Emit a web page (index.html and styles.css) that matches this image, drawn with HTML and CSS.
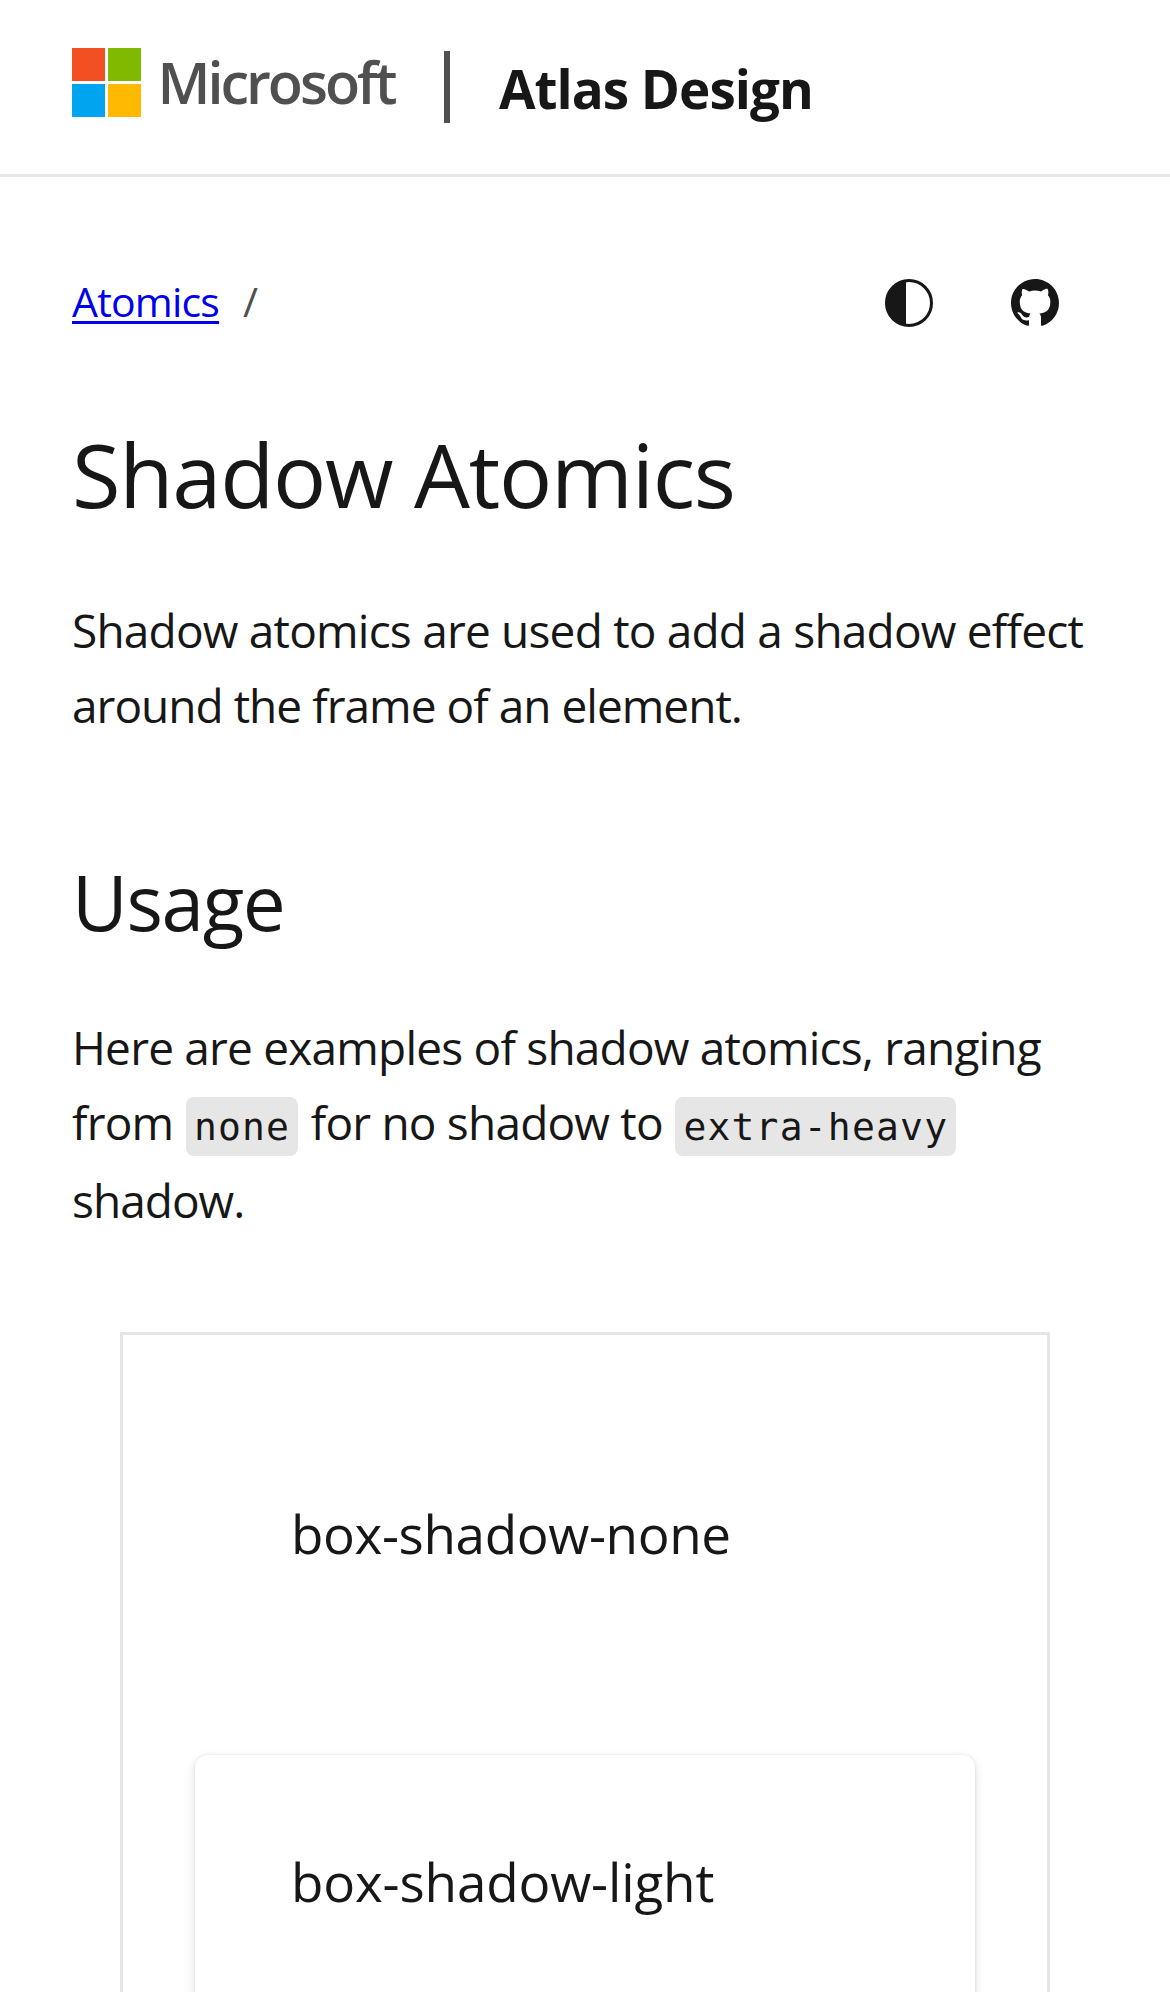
FILE: index.html
```
<!DOCTYPE html>
<html lang="en">
<head>
<meta charset="utf-8">
<title>Shadow Atomics</title>
<link rel="stylesheet" href="styles.css">
</head>
<body>
<header class="site-header">
  <svg class="logo" width="378" height="76" viewBox="0 0 378 76" role="img" aria-label="Microsoft">
    <path fill="#f25022" d="M0 0h33v33H0z"/><path fill="#7fba00" d="M36 0h33v33H36z"/>
    <path fill="#00a4ef" d="M0 36h33v33H0z"/><path fill="#ffb900" d="M36 36h33v33H36z"/>
    <text class="logo-text" x="85.5" y="55.5" textLength="240">Microsoft</text>
    <path fill="#505050" d="M372 3h6v72h-6z"/>
  </svg>
  <span class="site-name">Atlas Design</span>
</header>
<main class="content">
  <div class="toolbar">
    <nav class="breadcrumb"><a href="#">Atomics</a><span class="slash">/</span></nav>
    <div class="actions">
      <svg width="48" height="48" viewBox="0 0 48 48"><circle cx="24" cy="24" r="22.5" fill="none" stroke="#171717" stroke-width="3"/><path fill="#171717" d="M21 1.5a22.6 22.6 0 0 0 0 45z"/></svg>
      <svg width="48" height="48" viewBox="0 0 16 16"><path fill="#171717" d="M8 0C3.58 0 0 3.58 0 8c0 3.54 2.29 6.53 5.47 7.59.4.07.55-.17.55-.38 0-.19-.01-.82-.01-1.49-2.01.37-2.53-.49-2.69-.94-.09-.23-.48-.94-.82-1.13-.28-.15-.68-.52-.01-.53.63-.01 1.08.58 1.23.82.72 1.21 1.87.87 2.33.66.07-.52.28-.87.51-1.07-1.78-.2-3.64-.89-3.64-3.95 0-.87.31-1.59.82-2.15-.08-.2-.36-1.02.08-2.12 0 0 .67-.21 2.2.82.64-.18 1.32-.27 2-.27.68 0 1.36.09 2 .27 1.53-1.04 2.2-.82 2.2-.82.44 1.1.16 1.92.08 2.12.51.56.82 1.27.82 2.15 0 3.07-1.87 3.75-3.65 3.95.29.25.54.73.54 1.48 0 1.07-.01 1.93-.01 2.2 0 .21.15.46.55.38A8.013 8.013 0 0016 8c0-4.42-3.58-8-8-8z"/></svg>
    </div>
  </div>
  <h1>Shadow Atomics</h1>
  <p class="intro">Shadow atomics are used to add a shadow effect<br><span class="tight">around the frame of an element.</span></p>
  <h2>Usage</h2>
  <p class="usage">Here are examples of shadow atomics, ranging<br>from <code>none</code> for no shadow to <code>extra-heavy</code><br><span class="tight">shadow.</span></p>
  <section class="example">
    <div class="card card-none">box-shadow-none</div>
    <div class="card card-light">box-shadow-light</div>
  </section>
</main>
</body>
</html>
```
FILE: styles.css
```
* { box-sizing: border-box; }
html { overflow: hidden; }
body { margin: 0; height: 1992px; overflow: hidden; background: #fff; color: #171717; font-family: "Open Sans", "Noto Sans", sans-serif; font-size: 46px; line-height: 75px; }
.site-header { display: flex; align-items: flex-start; height: 177px; padding: 48px 72px 0; border-bottom: 3px solid #e6e6e6; }
.logo { flex: none; overflow: visible; }
.logo-text { font-size: 57.5px; font-weight: 600; fill: #505050; }
.site-name { margin: 5px 0 0 49px; font-size: 53px; font-weight: 700; line-height: 71px; letter-spacing: -1px; }
.content { padding: 94px 72px 0; }
.toolbar { display: flex; justify-content: space-between; height: 64px; padding-right: 39px; }
.breadcrumb { display: flex; gap: 24px; font-size: 41px; line-height: 60px; letter-spacing: -.8px; }
.breadcrumb a { color: #00e; text-decoration: underline; text-decoration-thickness: 3px; text-underline-offset: 4px; }
.slash { color: #505050; }
.actions { display: flex; align-items: center; gap: 78px; }
h1 { margin: 81px 0 0; font-size: 88.5px; font-weight: 400; line-height: 116px; letter-spacing: -1.27px; }
h2 { margin: 108px 0 0; font-size: 76.5px; font-weight: 400; line-height: 100px; letter-spacing: -1.35px; }
p { margin: 61px 0 0; letter-spacing: -.8px; white-space: nowrap; }
.tight { letter-spacing: -.98px; }
.usage { margin-top: 59px; }
code { margin: 0 1.4px; padding: 8px 8px 7px; border-radius: 8px; background: #e6e6e6; font-family: "DejaVu Sans Mono", monospace; font-size: 38px; line-height: 70.8px; letter-spacing: 1.2px; }
.example { display: flex; flex-direction: column; gap: 95px; margin: 94px 48px 0; padding: 72px; border: 3px solid #e6e6e6; }
.card { padding: 96px; border-radius: 12px; font-size: 53px; line-height: 61px; }
.card-none { letter-spacing: -.38px; }
.card-light { letter-spacing: -.16px; box-shadow: 0 4.8px 10.8px rgba(0, 0, 0, .13), 0 .9px 2.7px rgba(0, 0, 0, .11); }
```
